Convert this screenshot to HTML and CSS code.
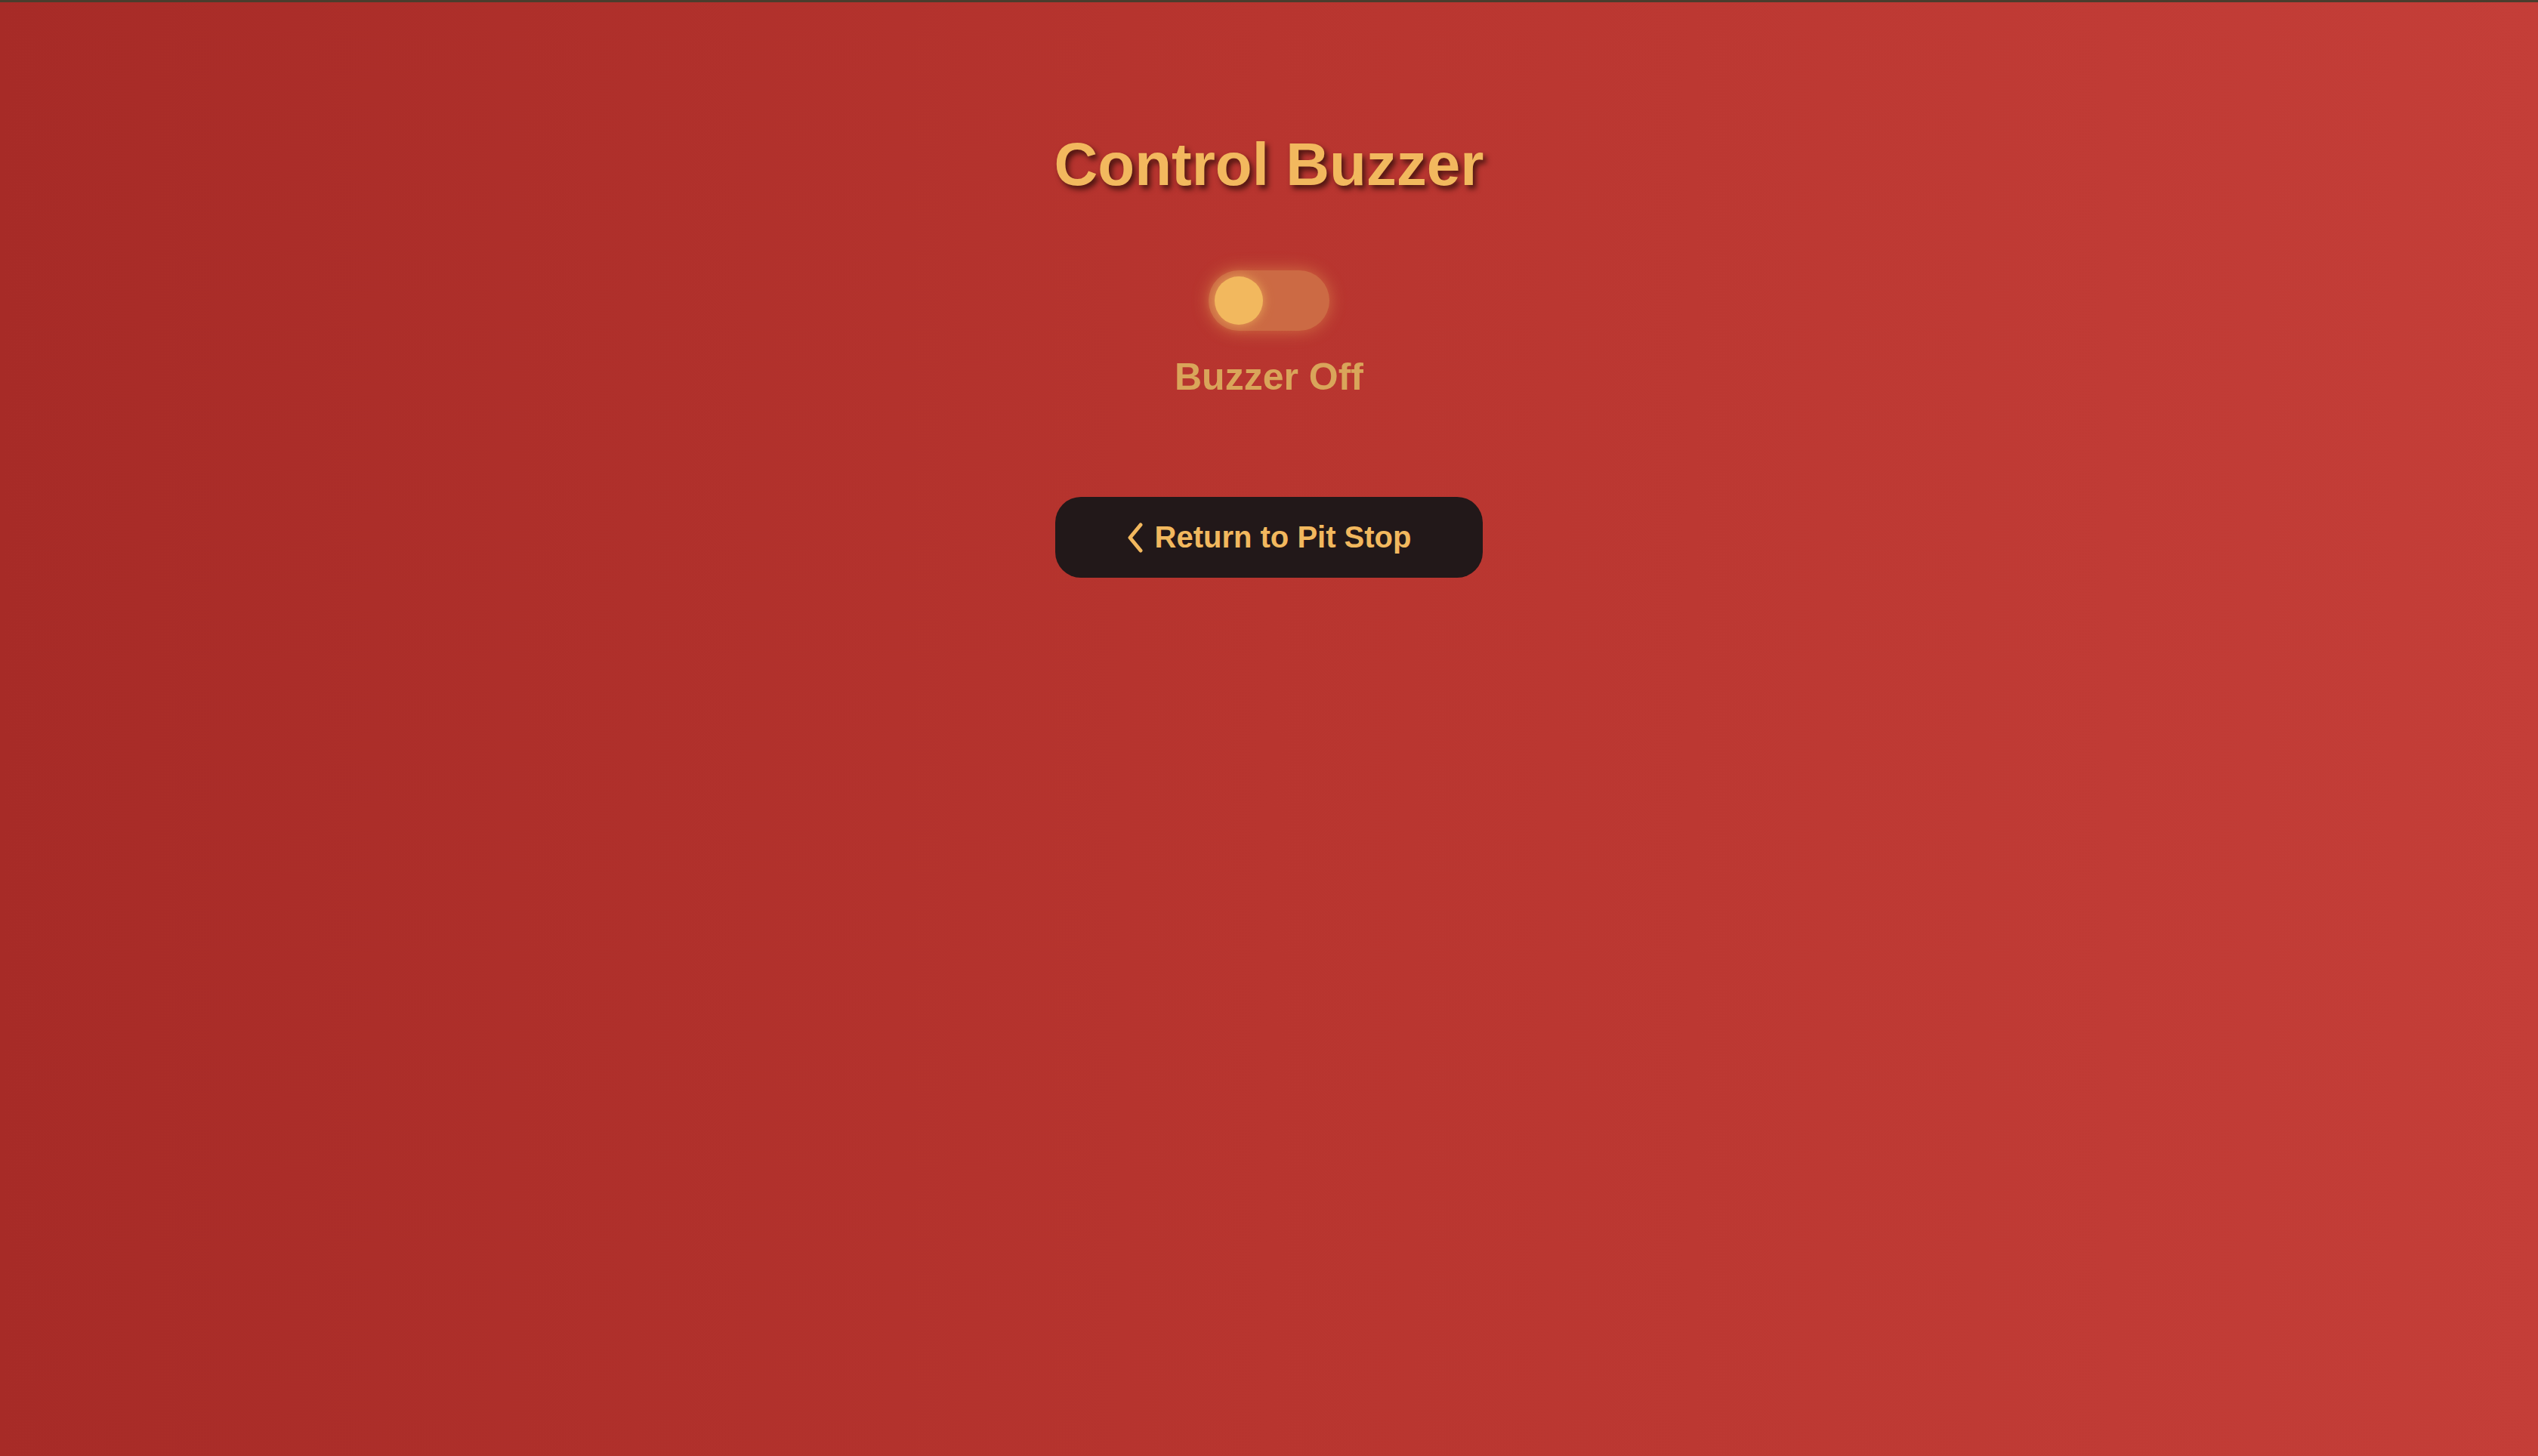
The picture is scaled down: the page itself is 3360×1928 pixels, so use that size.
FILE: index.html
```html
<!DOCTYPE html>
<html lang="en">
<head>
<meta charset="utf-8">
<title>Control Buzzer</title>
<link rel="stylesheet" href="styles.css">
</head>
<body>
<main class="page">
  <h1 class="title">Control Buzzer</h1>
  <div class="control">
    <button class="switch" type="button" role="switch" aria-checked="false" aria-label="Buzzer"><span class="knob"></span></button>
    <p class="status">Buzzer Off</p>
  </div>
  <a class="back" href="#">
    <svg class="chev" width="22" height="40" viewBox="0 0 22 40" aria-hidden="true"><path d="M18 3 L4 20 L18 37" fill="none" stroke="currentColor" stroke-width="5" stroke-linecap="round" stroke-linejoin="round"/></svg>
    <span>Return to Pit Stop</span>
  </a>
</main>
</body>
</html>
```
FILE: styles.css
```css
* { box-sizing: border-box; }
html, body { margin: 0; padding: 0; }
body {
  min-height: 100vh;
  background: linear-gradient(90deg, #a72b27 0%, #b8352f 50%, #c43e38 100%);
  border-top: 3px solid #4a3d2d;
  font-family: "Liberation Sans", Arial, Helvetica, sans-serif;
}
.page {
  display: flex;
  flex-direction: column;
  align-items: center;
  padding-top: 169px;
}
.title {
  margin: 0;
  font-size: 80px;
  line-height: 92px;
  font-weight: 700;
  color: #f2b85e;
  text-shadow: 4px 5px 7px rgba(30, 8, 4, 0.7);
}
.control {
  display: flex;
  flex-direction: column;
  align-items: center;
  margin-top: 94px;
}
.switch {
  width: 160px;
  height: 80px;
  padding: 8px;
  border: 0;
  border-radius: 40px;
  background: #cc6a44;
  box-shadow: 0 0 22px rgba(242, 184, 94, 0.45);
  display: flex;
  align-items: center;
  justify-content: flex-start;
  cursor: pointer;
}
.knob {
  width: 64px;
  height: 64px;
  border-radius: 50%;
  background: #f2b85e;
  box-shadow: 0 0 14px rgba(242, 184, 94, 0.75);
}
.status {
  margin: 32px 0 0;
  font-size: 50px;
  line-height: 58px;
  font-weight: 700;
  color: #d9a55a;
}
.back {
  margin-top: 130px;
  display: flex;
  align-items: center;
  gap: 15px;
  padding: 30px 95px;
  border-radius: 34px;
  background: #221819;
  color: #f2b85e;
  text-decoration: none;
  font-size: 40px;
  line-height: 47px;
  font-weight: 700;
}
.chev { display: block; flex: none; }
```
